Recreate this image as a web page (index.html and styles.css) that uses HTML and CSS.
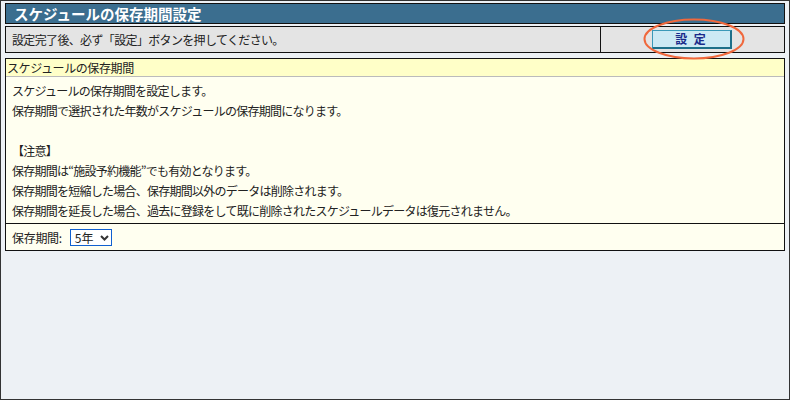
FILE: index.html
```html
<!DOCTYPE html>
<html lang="ja">
<head>
<meta charset="utf-8">
<link rel="stylesheet" href="styles.css">
</head>
<body>
<div class="frame">
  <div class="title">スケジュールの保存期間設定</div>
  <div class="actionbar">
    <div class="notice">設定完了後、必ず「設定」ボタンを押してください。</div>
    <div class="btncell">
      <button class="setbtn">設 定</button>
      <svg class="ring" width="104" height="44" viewBox="0 0 104 44"><ellipse cx="52" cy="22" rx="49.5" ry="19.5" fill="none" stroke="#f0683c" stroke-width="2"/></svg>
    </div>
  </div>
  <div class="section">
    <div class="sechead">スケジュールの保存期間</div>
    <div class="secbody">
      <p>スケジュールの保存期間を設定します。</p>
      <p>保存期間で選択された年数がスケジュールの保存期間になります。</p>
      <p>&nbsp;</p>
      <p>【注意】</p>
      <p>保存期間は“施設予約機能”でも有効となります。</p>
      <p>保存期間を短縮した場合、保存期間以外のデータは削除されます。</p>
      <p>保存期間を延長した場合、過去に登録をして既に削除されたスケジュールデータは復元されません。</p>
    </div>
    <div class="secfoot">
      <span class="label">保存期間:</span>
      <span class="select">5年<svg class="chev" width="9" height="6" viewBox="0 0 9 6"><path d="M1 1 L4.5 4.5 L8 1" fill="none" stroke="#333" stroke-width="2"/></svg></span>
    </div>
  </div>
</div>
</body>
</html>
```
FILE: styles.css
```css
html, body { margin: 0; padding: 0; }
body {
  font-family: "Noto Sans CJK JP", "Noto Sans", sans-serif;
  font-size: 12px;
  color: #222;
  background: #edf1f5;
}
.frame {
  box-sizing: border-box;
  width: 790px;
  height: 400px;
  border: 1px solid #333;
  padding: 2px 4px 0 4px;
  background: #edf1f5;
}
.title {
  height: 19px;
  border: 1px solid #111;
  background: #3b6e8f;
  color: #fff;
  font-weight: bold;
  font-size: 14.5px;
  line-height: 19px;
  padding-left: 8px;
  letter-spacing: 0;
}
.actionbar {
  margin-top: 2px;
  display: flex;
  height: 25px;
  border: 1px solid #111;
  background: #e4e4e4;
}
.notice {
  width: 588px;
  padding-left: 6px;
  line-height: 25px;
  border-right: 1px solid #111;
  letter-spacing: -0.65px;
}
.btncell {
  flex: 1;
  position: relative;
  display: flex;
  align-items: center;
  justify-content: center;
}
.setbtn {
  box-sizing: border-box;
  width: 80px;
  height: 19px;
  margin-left: -1px;
  margin-top: -1px;
  padding: 0;
  background: #cce9f4;
  border: 1px solid #3a98b8;
  border-right: 2px solid #1d6f8a;
  border-bottom: 2px solid #1d6f8a;
  color: #1a2a8a;
  font-family: "Noto Sans CJK JP", sans-serif;
  font-weight: bold;
  font-size: 12px;
  line-height: 15px;
  letter-spacing: 2px;
}
.ring {
  position: absolute;
  left: 41px;
  top: -10px;
}
.section {
  margin-top: 5px;
  border: 1px solid #111;
  background: #fffff0;
}
.sechead {
  height: 17px;
  line-height: 17px;
  padding-left: 1px;
  background: #ffffc8;
  border-bottom: 1px solid #bbb;
  letter-spacing: -0.4px;
}
.secbody {
  padding: 4px 6px 2px 6px;
  border-bottom: 1px solid #111;
}
.secbody p {
  margin: 0;
  line-height: 20px;
  letter-spacing: -0.75px;
}
.secfoot {
  height: 26px;
  display: flex;
  align-items: center;
  padding-left: 6px;
}
.label { letter-spacing: -0.3px; margin-right: 8px; }
.select {
  box-sizing: border-box;
  height: 17px;
  width: 42px;
  border: 1px solid #1060d0;
  background: #fff;
  display: flex;
  align-items: center;
  padding-left: 4px;
  gap: 6px;
  line-height: 15px;
  margin-top: 1px;
}
```
